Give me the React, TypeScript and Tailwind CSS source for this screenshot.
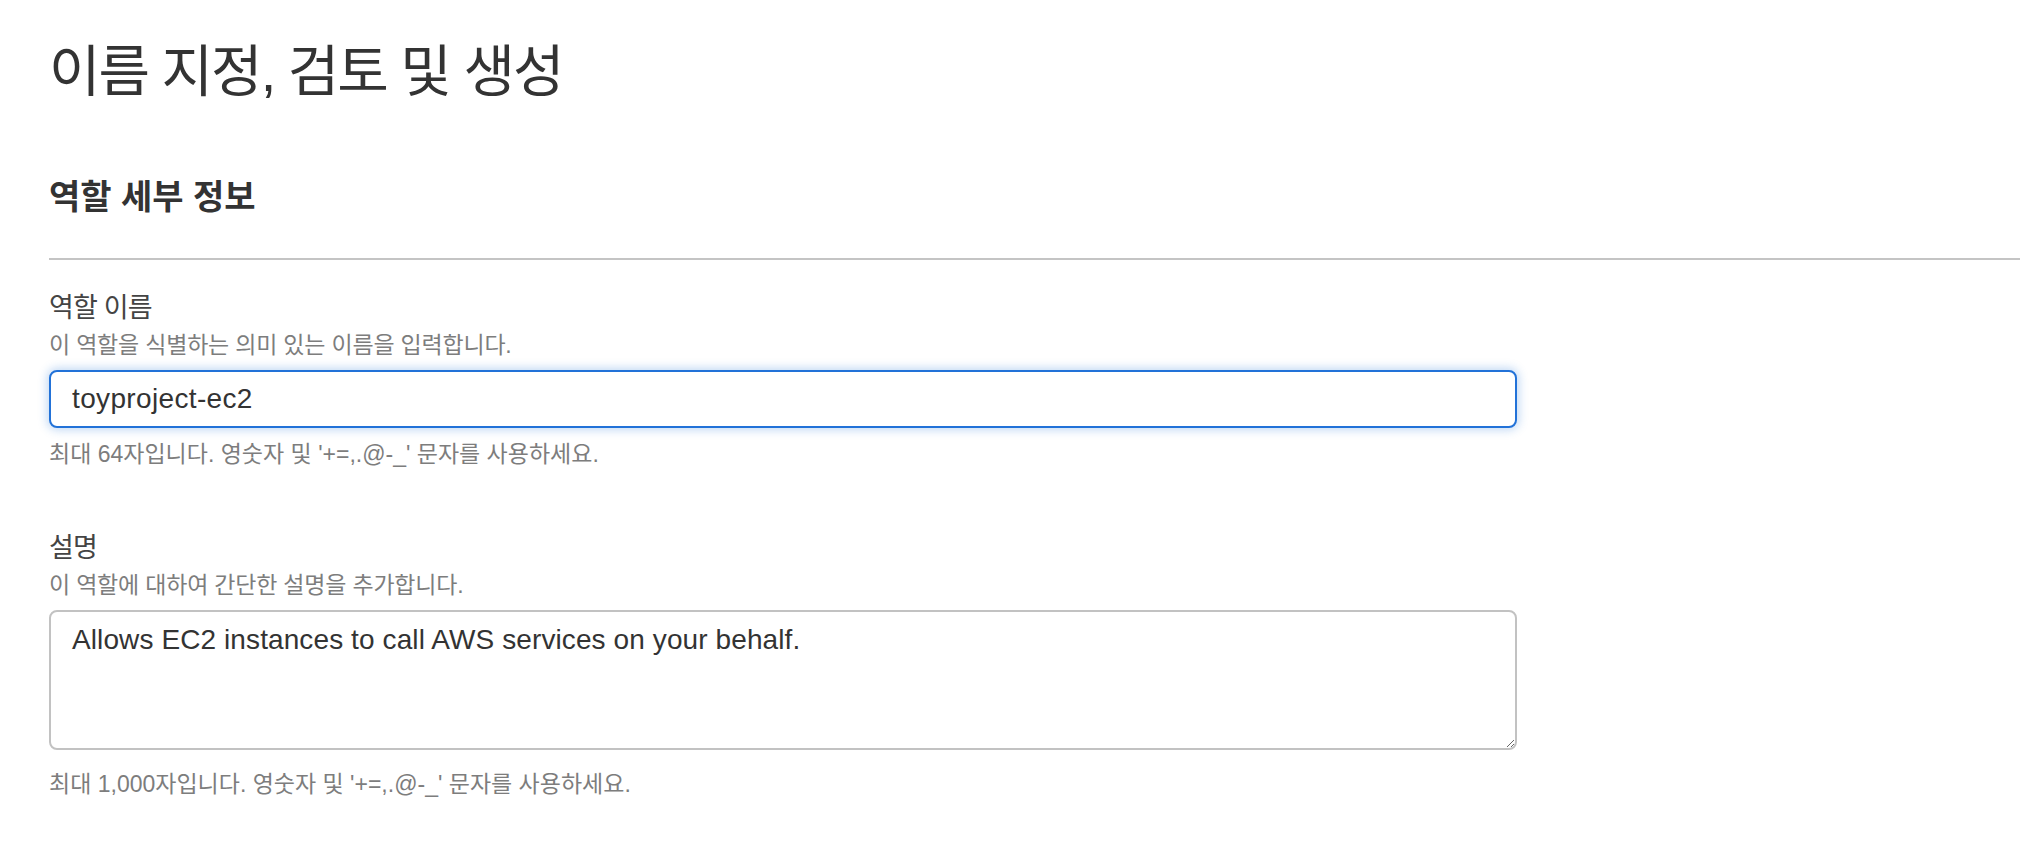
import { useState } from 'react';

// --- 이름 지정, 검토 및 생성 (IAM 역할 생성 단계) ---

const fontStack = "font-['Liberation_Sans','Noto_Sans_CJK_KR',sans-serif]";

function Field({
    label,
    hint,
    note,
    noteGap,
    children,
}: {
    label: string;
    hint: string;
    note: string;
    noteGap: string;
    children: React.ReactNode;
}) {
    return (
        <div className="w-[1468px]">
            <div className="text-[27px] leading-[36px] tracking-[-0.8px] text-[#444]">{label}</div>
            <div className="mt-[4px] text-[23px] leading-[30px] tracking-[-0.2px] text-[#7d7d7d]">{hint}</div>
            <div className="mt-[10px]">{children}</div>
            <div className={`${noteGap} text-[23px] leading-[30px] tracking-[0px] text-[#7d7d7d]`}>{note}</div>
        </div>
    );
}

export default function App() {
    const [roleName, setRoleName] = useState('toyproject-ec2');
    const [description, setDescription] = useState('Allows EC2 instances to call AWS services on your behalf.');

    return (
        <div className={`min-h-screen bg-white pl-[49px] pr-[8px] pt-[36px] text-[#333] ${fontStack}`}>
            {/* 페이지 제목 */}
            <h1 className="text-[56px] leading-[72px] tracking-[-2px] text-[#333]">이름 지정, 검토 및 생성</h1>

            {/* 역할 세부 정보 */}
            <h2 className="mt-[67px] text-[34px] font-bold leading-[44px] text-[#333]">역할 세부 정보</h2>
            <div className="mt-[39px] h-[2px] bg-[#c4c4c4]" />

            <div className="mt-[30px]">
                <Field
                    label="역할 이름"
                    hint="이 역할을 식별하는 의미 있는 이름을 입력합니다."
                    note="최대 64자입니다. 영숫자 및 '+=,.@-_' 문자를 사용하세요."
                    noteGap="mt-[11px]"
                >
                    <input
                        value={roleName}
                        onChange={(e) => setRoleName(e.target.value)}
                        className="block h-[58px] w-full rounded-[8px] border-2 border-[#2272d8] bg-white px-[21px] text-[28px] tracking-[0.35px] text-[#333] shadow-[0_0_10px_2px_rgba(34,114,216,0.28)] outline-none"
                    />
                </Field>
            </div>

            <div className="mt-[61px]">
                <Field
                    label="설명"
                    hint="이 역할에 대하여 간단한 설명을 추가합니다."
                    note="최대 1,000자입니다. 영숫자 및 '+=,.@-_' 문자를 사용하세요."
                    noteGap="mt-[19px]"
                >
                    <textarea
                        value={description}
                        onChange={(e) => setDescription(e.target.value)}
                        className="block h-[140px] w-full rounded-[8px] border-2 border-[#c2c2c2] bg-white px-[21px] pt-[10px] text-[28px] leading-[36px] tracking-[0.1px] text-[#333] outline-none"
                    />
                </Field>
            </div>
        </div>
    );
}
